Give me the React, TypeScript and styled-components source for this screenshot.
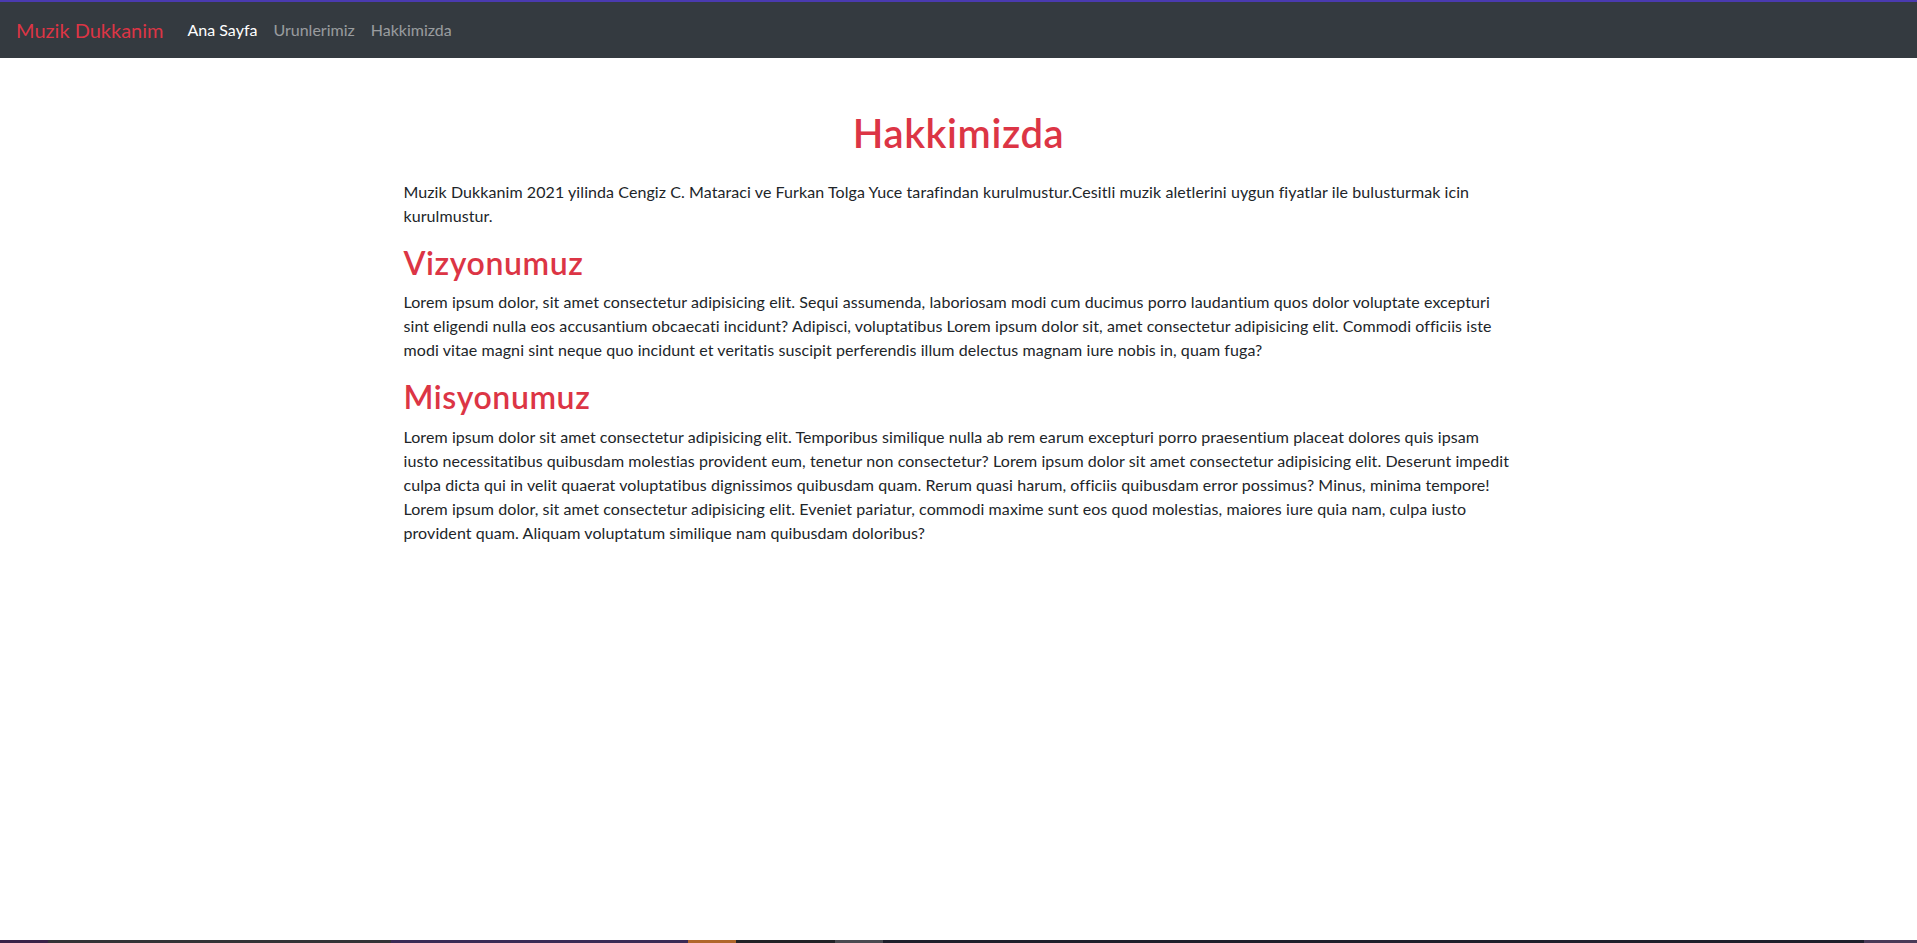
import styled, { createGlobalStyle } from "styled-components";

const GlobalStyle = createGlobalStyle`
  *, *::before, *::after { box-sizing: border-box; }
  html, body { margin: 0; padding: 0; }
  body {
    font-family: Lato, "Open Sans", sans-serif;
    font-size: 16px;
    line-height: 1.5;
    color: #212529;
    background: #fff;
  }
`;

const Page = styled.div`
  min-height: 100vh;
  display: flex;
  flex-direction: column;
`;

const TopStripe = styled.div`
  height: 2px;
  background: #4a3ab0;
`;

const Navbar = styled.nav`
  display: flex;
  align-items: center;
  height: 56px;
  padding: 8px 16px;
  background: #343a40;
`;

const Brand = styled.a`
  font-size: 20px;
  line-height: 30px;
  color: #dc3545;
  margin-right: 16px;
  text-decoration: none;
`;

const NavLink = styled.a<{ $active?: boolean }>`
  padding: 8px;
  font-size: 16px;
  color: ${(p) => (p.$active ? "#fff" : "rgba(255,255,255,.5)")};
  text-decoration: none;
`;

const Container = styled.main`
  width: 1140px;
  margin: 0 auto;
  padding: 0 15px;
  flex: 1;
`;

const Title = styled.h1`
  margin: 51px 0 23px;
  text-align: center;
  font-size: 40px;
  font-weight: 600;
  line-height: 1.2;
  letter-spacing: 0.6px;
  color: #dc3545;
`;

const SubTitle = styled.h2`
  margin: 0 0 8px;
  font-size: 32px;
  font-weight: 600;
  line-height: 1.2;
  letter-spacing: 0.6px;
  color: #dc3545;
`;

const Text = styled.p`
  margin: 0 0 16px;
  letter-spacing: 0.08px;
`;

const BottomStrip = styled.div`
  display: flex;
  height: 3px;
`;

const Seg = styled.div<{ $w: number; $c: string }>`
  width: ${(p) => p.$w}px;
  background: ${(p) => p.$c};
`;

const segs: [number, string][] = [
  [48, "#3a2248"],
  [343, "#333336"],
  [297, "#3a2a55"],
  [48, "#b0662a"],
  [99, "#222226"],
  [48, "#4a4a50"],
  [981, "#1e1e2a"],
  [53, "#4a3a58"],
];

export default function App() {
  return (
    <Page>
      <GlobalStyle />
      <TopStripe />
      <Navbar>
        <Brand href="#">Muzik Dukkanim</Brand>
        <NavLink $active href="#">Ana Sayfa</NavLink>
        <NavLink href="#">Urunlerimiz</NavLink>
        <NavLink href="#">Hakkimizda</NavLink>
      </Navbar>
      <Container>
        <Title>Hakkimizda</Title>
        <Text>
          Muzik Dukkanim 2021 yilinda Cengiz C. Mataraci ve Furkan Tolga Yuce tarafindan kurulmustur.Cesitli muzik aletlerini uygun fiyatlar ile bulusturmak icin kurulmustur.
        </Text>
        <SubTitle>Vizyonumuz</SubTitle>
        <Text>
          Lorem ipsum dolor, sit amet consectetur adipisicing elit. Sequi assumenda, laboriosam modi cum ducimus porro laudantium quos dolor voluptate excepturi sint eligendi nulla eos accusantium obcaecati incidunt? Adipisci, voluptatibus Lorem ipsum dolor sit, amet consectetur adipisicing elit. Commodi officiis iste modi vitae magni sint neque quo incidunt et veritatis suscipit perferendis illum delectus magnam iure nobis in, quam fuga?
        </Text>
        <SubTitle>Misyonumuz</SubTitle>
        <Text>
          Lorem ipsum dolor sit amet consectetur adipisicing elit. Temporibus similique nulla ab rem earum excepturi porro praesentium placeat dolores quis ipsam iusto necessitatibus quibusdam molestias provident eum, tenetur non consectetur? Lorem ipsum dolor sit amet consectetur adipisicing elit. Deserunt impedit culpa dicta qui in velit quaerat voluptatibus dignissimos quibusdam quam. Rerum quasi harum, officiis quibusdam error possimus? Minus, minima tempore! Lorem ipsum dolor, sit amet consectetur adipisicing elit. Eveniet pariatur, commodi maxime sunt eos quod molestias, maiores iure quia nam, culpa iusto provident quam. Aliquam voluptatum similique nam quibusdam doloribus?
        </Text>
      </Container>
      <BottomStrip>
        {segs.map(([w, c], i) => (
          <Seg key={i} $w={w} $c={c} />
        ))}
      </BottomStrip>
    </Page>
  );
}
